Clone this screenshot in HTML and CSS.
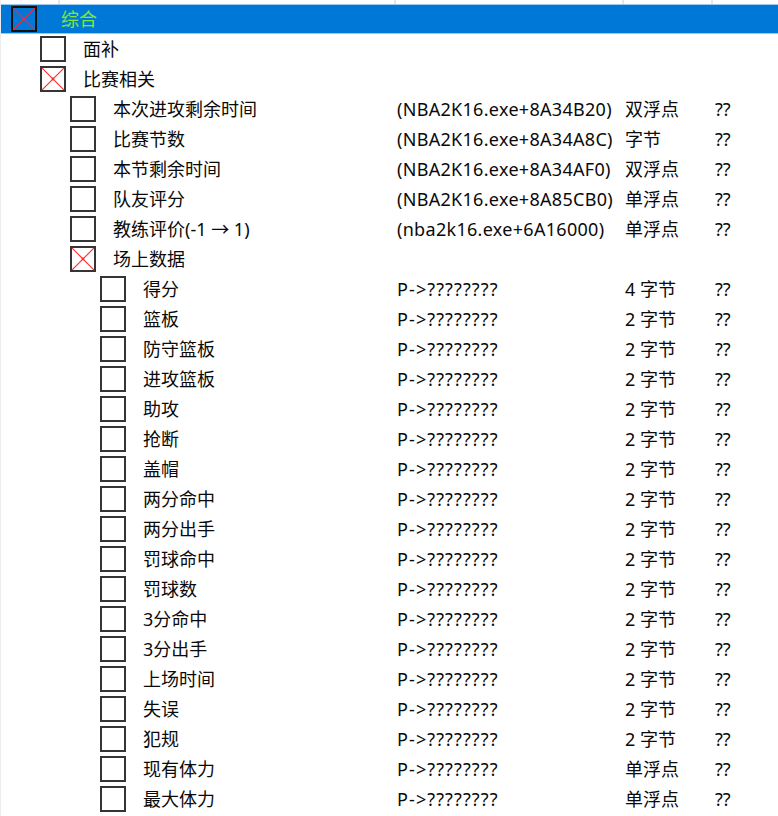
FILE: index.html
```html
<!DOCTYPE html>
<html lang="zh-CN">
<head>
<meta charset="utf-8">
<title>Cheat table</title>
<link rel="stylesheet" href="styles.css">
</head>
<body>
<div class="table">
  <div class="header">
    <div class="hcol"></div>
    <div class="hcol"></div>
    <div class="hcol"></div>
    <div class="hcol"></div>
  </div>
  <div class="rows">
    <div class="row selected lvl0">
      <div class="cell c-name"><span class="box checked"><svg viewBox="0 0 22 22"><path d="M0 0L22 22M22 0L0 22"/><circle cx="11" cy="11" r="1.4"/></svg></span><span class="label green">综合</span></div>
      <div class="cell c-addr"></div><div class="cell c-type"></div><div class="cell c-val"></div>
    </div>
    <div class="row lvl1">
      <div class="cell c-name"><span class="box"></span><span class="label">面补</span></div>
      <div class="cell c-addr"></div><div class="cell c-type"></div><div class="cell c-val"></div>
    </div>
    <div class="row lvl1">
      <div class="cell c-name"><span class="box checked"><svg viewBox="0 0 22 22"><path d="M0 0L22 22M22 0L0 22"/><circle cx="11" cy="11" r="1.4"/></svg></span><span class="label">比赛相关</span></div>
      <div class="cell c-addr"></div><div class="cell c-type"></div><div class="cell c-val"></div>
    </div>
    <div class="row lvl2">
      <div class="cell c-name"><span class="box"></span><span class="label">本次进攻剩余时间</span></div>
      <div class="cell c-addr addr">(NBA2K16.exe+8A34B20)</div><div class="cell c-type">双浮点</div><div class="cell c-val">??</div>
    </div>
    <div class="row lvl2">
      <div class="cell c-name"><span class="box"></span><span class="label">比赛节数</span></div>
      <div class="cell c-addr addr">(NBA2K16.exe+8A34A8C)</div><div class="cell c-type">字节</div><div class="cell c-val">??</div>
    </div>
    <div class="row lvl2">
      <div class="cell c-name"><span class="box"></span><span class="label">本节剩余时间</span></div>
      <div class="cell c-addr addr">(NBA2K16.exe+8A34AF0)</div><div class="cell c-type">双浮点</div><div class="cell c-val">??</div>
    </div>
    <div class="row lvl2">
      <div class="cell c-name"><span class="box"></span><span class="label">队友评分</span></div>
      <div class="cell c-addr addr">(NBA2K16.exe+8A85CB0)</div><div class="cell c-type">单浮点</div><div class="cell c-val">??</div>
    </div>
    <div class="row lvl2">
      <div class="cell c-name"><span class="box"></span><span class="label">教练评价(-1 → 1)</span></div>
      <div class="cell c-addr addr">(nba2k16.exe+6A16000)</div><div class="cell c-type">单浮点</div><div class="cell c-val">??</div>
    </div>
    <div class="row lvl2">
      <div class="cell c-name"><span class="box checked"><svg viewBox="0 0 22 22"><path d="M0 0L22 22M22 0L0 22"/><circle cx="11" cy="11" r="1.4"/></svg></span><span class="label">场上数据</span></div>
      <div class="cell c-addr"></div><div class="cell c-type"></div><div class="cell c-val"></div>
    </div>
    <div class="row lvl3"><div class="cell c-name"><span class="box"></span><span class="label">得分</span></div><div class="cell c-addr ptr">P-&gt;????????</div><div class="cell c-type">4 字节</div><div class="cell c-val">??</div></div>
    <div class="row lvl3"><div class="cell c-name"><span class="box"></span><span class="label">篮板</span></div><div class="cell c-addr ptr">P-&gt;????????</div><div class="cell c-type">2 字节</div><div class="cell c-val">??</div></div>
    <div class="row lvl3"><div class="cell c-name"><span class="box"></span><span class="label">防守篮板</span></div><div class="cell c-addr ptr">P-&gt;????????</div><div class="cell c-type">2 字节</div><div class="cell c-val">??</div></div>
    <div class="row lvl3"><div class="cell c-name"><span class="box"></span><span class="label">进攻篮板</span></div><div class="cell c-addr ptr">P-&gt;????????</div><div class="cell c-type">2 字节</div><div class="cell c-val">??</div></div>
    <div class="row lvl3"><div class="cell c-name"><span class="box"></span><span class="label">助攻</span></div><div class="cell c-addr ptr">P-&gt;????????</div><div class="cell c-type">2 字节</div><div class="cell c-val">??</div></div>
    <div class="row lvl3"><div class="cell c-name"><span class="box"></span><span class="label">抢断</span></div><div class="cell c-addr ptr">P-&gt;????????</div><div class="cell c-type">2 字节</div><div class="cell c-val">??</div></div>
    <div class="row lvl3"><div class="cell c-name"><span class="box"></span><span class="label">盖帽</span></div><div class="cell c-addr ptr">P-&gt;????????</div><div class="cell c-type">2 字节</div><div class="cell c-val">??</div></div>
    <div class="row lvl3"><div class="cell c-name"><span class="box"></span><span class="label">两分命中</span></div><div class="cell c-addr ptr">P-&gt;????????</div><div class="cell c-type">2 字节</div><div class="cell c-val">??</div></div>
    <div class="row lvl3"><div class="cell c-name"><span class="box"></span><span class="label">两分出手</span></div><div class="cell c-addr ptr">P-&gt;????????</div><div class="cell c-type">2 字节</div><div class="cell c-val">??</div></div>
    <div class="row lvl3"><div class="cell c-name"><span class="box"></span><span class="label">罚球命中</span></div><div class="cell c-addr ptr">P-&gt;????????</div><div class="cell c-type">2 字节</div><div class="cell c-val">??</div></div>
    <div class="row lvl3"><div class="cell c-name"><span class="box"></span><span class="label">罚球数</span></div><div class="cell c-addr ptr">P-&gt;????????</div><div class="cell c-type">2 字节</div><div class="cell c-val">??</div></div>
    <div class="row lvl3"><div class="cell c-name"><span class="box"></span><span class="label">3分命中</span></div><div class="cell c-addr ptr">P-&gt;????????</div><div class="cell c-type">2 字节</div><div class="cell c-val">??</div></div>
    <div class="row lvl3"><div class="cell c-name"><span class="box"></span><span class="label">3分出手</span></div><div class="cell c-addr ptr">P-&gt;????????</div><div class="cell c-type">2 字节</div><div class="cell c-val">??</div></div>
    <div class="row lvl3"><div class="cell c-name"><span class="box"></span><span class="label">上场时间</span></div><div class="cell c-addr ptr">P-&gt;????????</div><div class="cell c-type">2 字节</div><div class="cell c-val">??</div></div>
    <div class="row lvl3"><div class="cell c-name"><span class="box"></span><span class="label">失误</span></div><div class="cell c-addr ptr">P-&gt;????????</div><div class="cell c-type">2 字节</div><div class="cell c-val">??</div></div>
    <div class="row lvl3"><div class="cell c-name"><span class="box"></span><span class="label">犯规</span></div><div class="cell c-addr ptr">P-&gt;????????</div><div class="cell c-type">2 字节</div><div class="cell c-val">??</div></div>
    <div class="row lvl3"><div class="cell c-name"><span class="box"></span><span class="label">现有体力</span></div><div class="cell c-addr ptr">P-&gt;????????</div><div class="cell c-type">单浮点</div><div class="cell c-val">??</div></div>
    <div class="row lvl3"><div class="cell c-name"><span class="box"></span><span class="label">最大体力</span></div><div class="cell c-addr ptr">P-&gt;????????</div><div class="cell c-type">单浮点</div><div class="cell c-val">??</div></div>
    <div class="row lvl0 partial">
      <div class="cell c-name"><span class="box faint"></span></div>
    </div>
  </div>
</div>
</body>
</html>
```
FILE: styles.css
```css
html, body {
  margin: 0;
  padding: 0;
  background: #ffffff;
}
body {
  width: 778px;
  height: 816px;
  overflow: hidden;
  font-family: "Noto Sans", "Noto Sans CJK SC", sans-serif;
  font-size: 18px;
  color: #0a0a0a;
}
.table {
  border-left: 1px solid #ececec;
  height: 816px;
  box-sizing: border-box;
}
.header {
  display: grid;
  grid-template-columns: 59px 336px 228px 89px 1fr;
  height: 4px;
}
.hcol {
  border-right: 2px solid #e6e6e6;
}
.rows {
  display: flex;
  flex-direction: column;
}
.row {
  display: grid;
  grid-template-columns: 395px 228px 90px 1fr;
  height: 30px;
  align-items: center;
  white-space: nowrap;
}
.row.selected {
  background: #0078d7;
  box-shadow: inset 0 1px 0 #99c9ef, inset 0 -1px 0 #99c9ef;
}
.cell {
  display: flex;
  align-items: center;
  height: 30px;
  line-height: 30px;
}
.c-addr, .c-type, .c-val { padding-left: 1px; }
.addr { letter-spacing: 0.3px; }
.ptr { letter-spacing: 1.1px; }
.box {
  width: 22px;
  height: 22px;
  border: 2px solid #353535;
  flex: none;
  display: block;
}
.box svg {
  display: block;
  width: 22px;
  height: 22px;
}
.box svg path {
  stroke: #ff2a2a;
  stroke-width: 1.1;
  fill: none;
}
.box svg circle {
  fill: #ff2a2a;
}
.selected .box {
  border-color: #111111;
}
.selected .box svg path {
  stroke: #f0283c;
  stroke-width: 1.2;
}
.selected .box svg circle { fill: #f0283c; }
.c-name { padding-left: 99px; }
.label { margin-left: 17px; }
.lvl0 .c-name { padding-left: 10px; }
.lvl0 .label { margin-left: 24px; }
.lvl1 .c-name { padding-left: 39px; }
.lvl2 .c-name { padding-left: 69px; }
.lvl3 .c-name { padding-left: 99px; }
.green { color: #80e63c; }
.partial .box.faint {
  border-color: #c8c8c8;
}
```
